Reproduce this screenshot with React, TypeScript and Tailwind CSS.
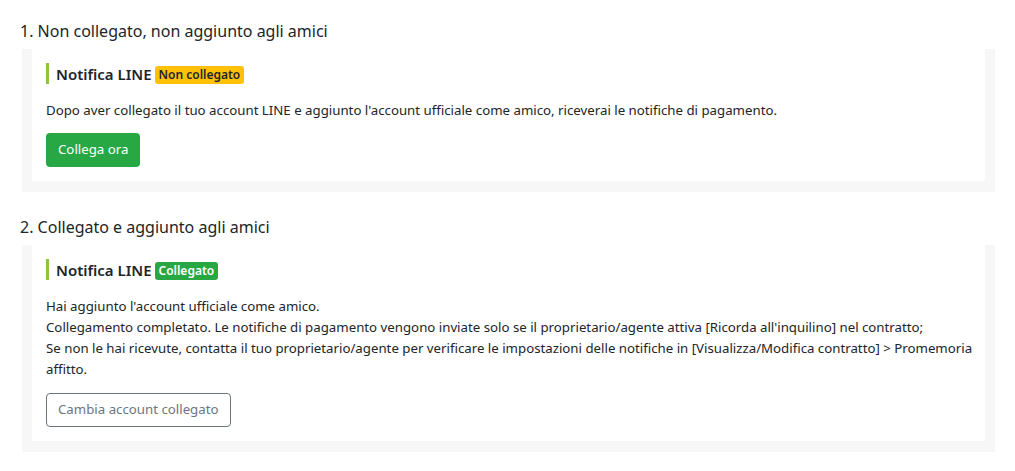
import React from 'react';

const font = { fontFamily: '"Noto Sans", "Open Sans", Arial, sans-serif' };

const Title: React.FC<{ badge: string; tone: 'warn' | 'ok' }> = ({ badge, tone }) => (
  <div className="flex items-center h-[21px] border-l-[3px] border-[#8cc63f] pl-[7px]">
    <span className="text-[15px] font-semibold text-[#212529] leading-[21px] pt-[2px]">Notifica LINE</span>
    <span
      className={`ml-[3px] mt-[2px] h-[18px] px-[4px] rounded-[3px] text-[12px] font-semibold leading-[18px] ${
        tone === 'warn' ? 'bg-[#ffc107] text-[#212529]' : 'bg-[#28a745] text-white'
      }`}
    >
      {badge}
    </span>
  </div>
);

export default function App() {
  return (
    <div className="bg-white min-h-[471px] pl-[20px] pr-[20px] pt-[19px] text-[#212529]" style={font}>
      {/* Section 1 */}
      <h3 className="text-[16px] leading-[24px] mb-[6px]">1. Non collegato, non aggiunto agli amici</h3>
      <div className="ml-[2px] w-[973px] bg-[#f7f7f7] px-[10px] pb-[11px]">
        <div className="bg-white pl-[14px] pr-[8px] pt-[14px] pb-[14px]">
          <Title badge="Non collegato" tone="warn" />
          <p className="mt-[16px] text-[13.25px] leading-[21px]">
            Dopo aver collegato il tuo account LINE e aggiunto l'account ufficiale come amico, riceverai le notifiche di pagamento.
          </p>
          <button className="mt-[12px] h-[34px] px-[12px] rounded-[4px] bg-[#28a745] text-white text-[13.25px]">
            Collega ora
          </button>
        </div>
      </div>

      {/* Section 2 */}
      <h3 className="mt-[23px] text-[16px] leading-[24px] mb-[6px]">2. Collegato e aggiunto agli amici</h3>
      <div className="ml-[2px] w-[973px] bg-[#f7f7f7] px-[10px] pb-[11px]">
        <div className="bg-white pl-[14px] pr-[8px] pt-[14px] pb-[14px]">
          <Title badge="Collegato" tone="ok" />
          <p className="mt-[16px] text-[13.25px] leading-[21px]">
            Hai aggiunto l'account ufficiale come amico.
            <br />
            Collegamento completato. Le notifiche di pagamento vengono inviate solo se il proprietario/agente attiva [Ricorda all'inquilino] nel contratto;
            <br />
            Se non le hai ricevute, contatta il tuo proprietario/agente per verificare le impostazioni delle notifiche in [Visualizza/Modifica contratto] &gt; Promemoria affitto.
          </p>
          <button className="mt-[13px] h-[34px] px-[11px] rounded-[4px] border border-[#6c757d] text-[#6c757d] text-[13.25px] bg-white">
            Cambia account collegato
          </button>
        </div>
      </div>
    </div>
  );
}
